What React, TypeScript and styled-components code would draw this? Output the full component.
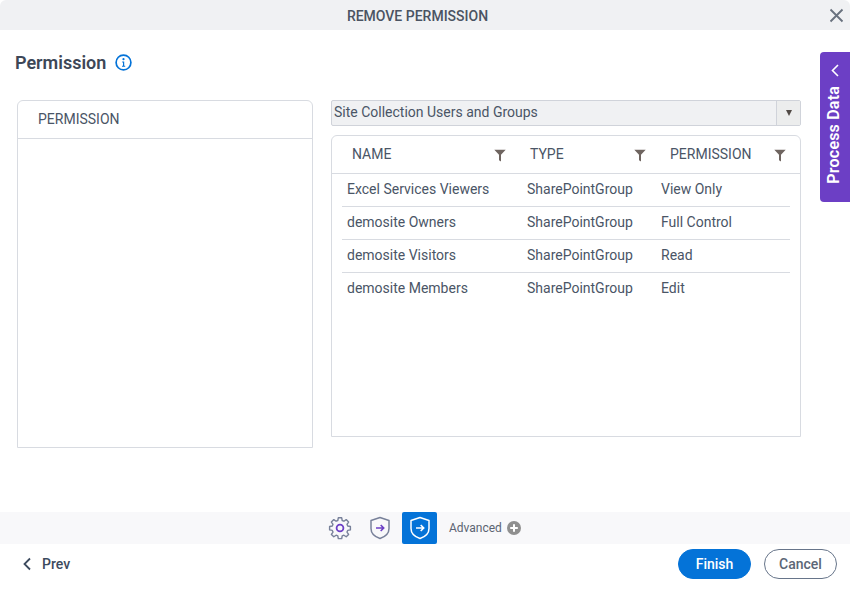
import React, { FC } from "react";
import styled, { createGlobalStyle } from "styled-components";

const GlobalStyle = createGlobalStyle`
  html, body {
    margin: 0;
    padding: 0;
    background: #fff;
    font-family: Roboto, "Liberation Sans", sans-serif;
    color: #3c4a5e;
  }
  * { box-sizing: border-box; }
`;

const Dialog = styled.div`
  position: relative;
  width: 850px;
  height: 590px;
  display: flex;
  flex-direction: column;
  overflow: hidden;
  background: #fff;
  border-radius: 6px 6px 0 0;
`;

const TitleBar = styled.header`
  position: relative;
  height: 30px;
  flex: none;
  padding: 2px 15px 0 0;
  display: flex;
  align-items: center;
  justify-content: center;
  background: #f0f1f3;
  font-size: 14px;
  font-weight: 500;
  color: #4a5362;
`;

const CloseButton = styled.button`
  position: absolute;
  top: 8px;
  right: 6px;
  width: 15px;
  height: 15px;
  padding: 0;
  border: 0;
  background: none;
  display: flex;
`;

const Body = styled.main`
  flex: 1;
  padding: 20px 49px 0 15px;
  display: flex;
  flex-direction: column;
`;

const Heading = styled.div`
  height: 24px;
  display: flex;
  align-items: center;
  gap: 9px;
  font-size: 18px;
  font-weight: 600;
  color: #3d4757;
`;

const Columns = styled.div`
  margin: 26px 0 0 2px;
  display: flex;
  gap: 18px;
`;

const Panel = styled.section`
  width: 296px;
  height: 348px;
  border: 1px solid #d8dbe1;
  border-radius: 6px 6px 0 0;
`;

const PanelHead = styled.div`
  height: 38px;
  padding: 0 0 2px 20px;
  display: flex;
  align-items: center;
  border-bottom: 1px solid #d8dbe1;
  font-size: 14px;
  color: #4a5566;
`;

const RightColumn = styled.div`
  width: 470px;
  display: flex;
  flex-direction: column;
  gap: 9px;
`;

const Select = styled.div`
  height: 26px;
  display: flex;
  align-items: stretch;
  border: 1px solid #d0d3da;
  border-radius: 2px;
  background: #f0f1f3;
  font-size: 14px;
  color: #4a5566;
`;

const SelectValue = styled.div`
  flex: 1;
  padding: 0 0 2px 2px;
  display: flex;
  align-items: center;
`;

const SelectArrow = styled.div`
  width: 24px;
  display: flex;
  align-items: center;
  justify-content: center;
  border-left: 1px solid #d0d3da;
  background: #eceded;
  &::after {
    content: "";
    border-left: 3.5px solid transparent;
    border-right: 3.5px solid transparent;
    border-top: 6px solid #514a46;
  }
`;

const TableBox = styled.section`
  height: 302px;
  border: 1px solid #d8dbe1;
  border-radius: 6px 6px 0 0;
`;

const HeadRow = styled.div`
  height: 38px;
  padding: 0 0 2px 20px;
  display: grid;
  grid-template-columns: 178px 140px 116px;
  align-items: center;
  border-bottom: 1px solid #d8dbe1;
`;

const HeadCell = styled.div`
  padding-right: 24px;
  display: flex;
  align-items: center;
  justify-content: space-between;
  font-size: 14px;
  color: #4a5566;
  &:last-child {
    padding-right: 0;
  }
`;

const FilterSvg = styled.svg`
  margin-top: 3px;
`;

const Row = styled.div<{ $last?: boolean }>`
  height: 33px;
  margin: 0 10px;
  padding: 0 0 2px 5px;
  display: grid;
  grid-template-columns: 180px 134px 1fr;
  align-items: center;
  font-size: 14px;
  color: #4a5566;
  border-bottom: 1px solid ${(p) => (p.$last ? "transparent" : "#d8dbe1")};
`;

const ProcessTab = styled.button`
  position: absolute;
  top: 52px;
  right: 0;
  width: 30px;
  height: 150px;
  padding: 12px 3px 0 0;
  border: 0;
  border-radius: 4px 0 0 4px;
  background: #6c3fc5;
  color: #fff;
  display: flex;
  flex-direction: column;
  align-items: center;
  gap: 9px;
  font-family: inherit;
`;

const TabChevron = styled.svg`
  margin-left: 3px;
`;

const TabLabel = styled.span`
  writing-mode: vertical-rl;
  transform: rotate(180deg);
  font-size: 16px;
  font-weight: 600;
  letter-spacing: 0.2px;
`;

const IconBar = styled.nav`
  height: 32px;
  flex: none;
  padding-left: 322px;
  display: flex;
  align-items: stretch;
  background: #f8f8fa;
`;

const IconSlot = styled.div<{ $active?: boolean }>`
  width: 35px;
  margin-right: ${(p) => (p.$active ? "12px" : "5px")};
  display: flex;
  align-items: center;
  justify-content: center;
  border-radius: 2px;
  background: ${(p) => (p.$active ? "#0473d8" : "transparent")};
`;

const Advanced = styled.div`
  display: flex;
  align-items: center;
  gap: 5px;
  font-size: 12px;
  color: #5b6472;
`;

const Footer = styled.footer`
  height: 46px;
  flex: none;
  padding: 0 13px 6px 22px;
  display: flex;
  align-items: center;
  justify-content: space-between;
`;

const PrevButton = styled.button`
  padding: 0;
  border: 0;
  background: none;
  display: flex;
  align-items: center;
  gap: 10px;
  font-family: inherit;
  font-size: 14px;
  font-weight: 500;
  color: #3c4a5e;
`;

const Actions = styled.div`
  display: flex;
  gap: 13px;
`;

const Pill = styled.button<{ $primary?: boolean }>`
  width: 73px;
  height: 30px;
  padding: 0;
  border-radius: 15px;
  border: 1px solid ${(p) => (p.$primary ? "#0473d8" : "#67758a")};
  background: ${(p) => (p.$primary ? "#0473d8" : "#fff")};
  color: ${(p) => (p.$primary ? "#fff" : "#5b6676")};
  font-family: inherit;
  font-size: 14px;
  font-weight: 500;
`;

const FilterIcon: FC = () => (
  <FilterSvg width="12" height="13" viewBox="0 0 12 13">
    <path d="M0.3 0.8h11.4L7 5.8v6.7L5 11.2V5.8z" fill="#6f6560" />
  </FilterSvg>
);

const InfoIcon: FC = () => (
  <svg width="17" height="17" viewBox="0 0 17 17">
    <circle cx="8.5" cy="8.5" r="7.4" fill="none" stroke="#0473d8" strokeWidth="1.7" />
    <circle cx="8.5" cy="5.2" r="1.1" fill="#0473d8" />
    <path d="M7.2 7.4h2v4.4h1v1H7v-1h1V8.4H7.2z" fill="#0473d8" />
  </svg>
);

const GearIcon: FC = () => (
  <svg width="24" height="24" viewBox="0 0 24 24" fill="none">
    <path
      d="M10.3 2.6h3.4l.5 2.7 1.7.7 2.3-1.6 2.4 2.4-1.6 2.3.7 1.7 2.7.5v3.4l-2.7.5-.7 1.7 1.6 2.3-2.4 2.4-2.3-1.6-1.7.7-.5 2.7h-3.4l-.5-2.7-1.7-.7-2.3 1.6-2.4-2.4 1.6-2.3-.7-1.7-2.7-.5v-3.4l2.7-.5.7-1.7-1.6-2.3 2.4-2.4 2.3 1.6 1.7-.7z"
      stroke="#78819a"
      strokeWidth="1.4"
      strokeLinejoin="round"
      transform="translate(0 -.8)"
    />
    <circle cx="12" cy="12" r="3.4" stroke="#6c3fc5" strokeWidth="1.8" />
  </svg>
);

const ShieldIcon: FC<{ outline: string; arrow: string }> = ({ outline, arrow }) => (
  <svg width="22" height="26" viewBox="0 0 22 26" fill="none">
    <path
      d="M11 2.5 20 5.5v8c0 5-3.6 8.2-9 10-5.4-1.8-9-5-9-10v-8z"
      stroke={outline}
      strokeWidth="1.5"
      strokeLinejoin="round"
    />
    <path d="M7 13h7.5M11.7 10l3 3-3 3" stroke={arrow} strokeWidth="1.6" />
  </svg>
);

const PlusCircle: FC = () => (
  <svg width="14" height="14" viewBox="0 0 14 14">
    <circle cx="7" cy="7" r="7" fill="#8f8f8f" />
    <path d="M7 3.2v7.6M3.2 7h7.6" stroke="#fff" strokeWidth="2" />
  </svg>
);

const rows = [
  { name: "Excel Services Viewers", type: "SharePointGroup", permission: "View Only" },
  { name: "demosite Owners", type: "SharePointGroup", permission: "Full Control" },
  { name: "demosite Visitors", type: "SharePointGroup", permission: "Read" },
  { name: "demosite Members", type: "SharePointGroup", permission: "Edit" }
];

const App: FC = () => (
  <Dialog>
    <GlobalStyle />
    <TitleBar>
      REMOVE PERMISSION
      <CloseButton aria-label="Close">
        <svg width="15" height="15" viewBox="0 0 15 15">
          <path d="M1.5 1.5l12 12M13.5 1.5l-12 12" stroke="#69727f" strokeWidth="1.9" />
        </svg>
      </CloseButton>
    </TitleBar>
    <Body>
      <Heading>
        Permission
        <InfoIcon />
      </Heading>
      <Columns>
        <Panel>
          <PanelHead>PERMISSION</PanelHead>
        </Panel>
        <RightColumn>
          <Select>
            <SelectValue>Site Collection Users and Groups</SelectValue>
            <SelectArrow />
          </Select>
          <TableBox>
            <HeadRow>
              <HeadCell>
                NAME
                <FilterIcon />
              </HeadCell>
              <HeadCell>
                TYPE
                <FilterIcon />
              </HeadCell>
              <HeadCell>
                PERMISSION
                <FilterIcon />
              </HeadCell>
            </HeadRow>
            {rows.map((r, i) => (
              <Row key={r.name} $last={i === rows.length - 1}>
                <span>{r.name}</span>
                <span>{r.type}</span>
                <span>{r.permission}</span>
              </Row>
            ))}
          </TableBox>
        </RightColumn>
      </Columns>
    </Body>
    <ProcessTab>
      <TabChevron width="12" height="13" viewBox="0 0 12 13">
        <path d="M9 1 3.5 6.5 9 12" fill="none" stroke="#fff" strokeWidth="1.6" />
      </TabChevron>
      <TabLabel>Process Data</TabLabel>
    </ProcessTab>
    <IconBar>
      <IconSlot>
        <GearIcon />
      </IconSlot>
      <IconSlot>
        <ShieldIcon outline="#78819a" arrow="#6c3fc5" />
      </IconSlot>
      <IconSlot $active>
        <ShieldIcon outline="#fff" arrow="#fff" />
      </IconSlot>
      <Advanced>
        Advanced
        <PlusCircle />
      </Advanced>
    </IconBar>
    <Footer>
      <PrevButton>
        <svg width="10" height="14" viewBox="0 0 10 14">
          <path d="M8 1.5 2.5 7 8 12.5" fill="none" stroke="#3c4a5e" strokeWidth="1.8" />
        </svg>
        Prev
      </PrevButton>
      <Actions>
        <Pill $primary>Finish</Pill>
        <Pill>Cancel</Pill>
      </Actions>
    </Footer>
  </Dialog>
);

export default App;
